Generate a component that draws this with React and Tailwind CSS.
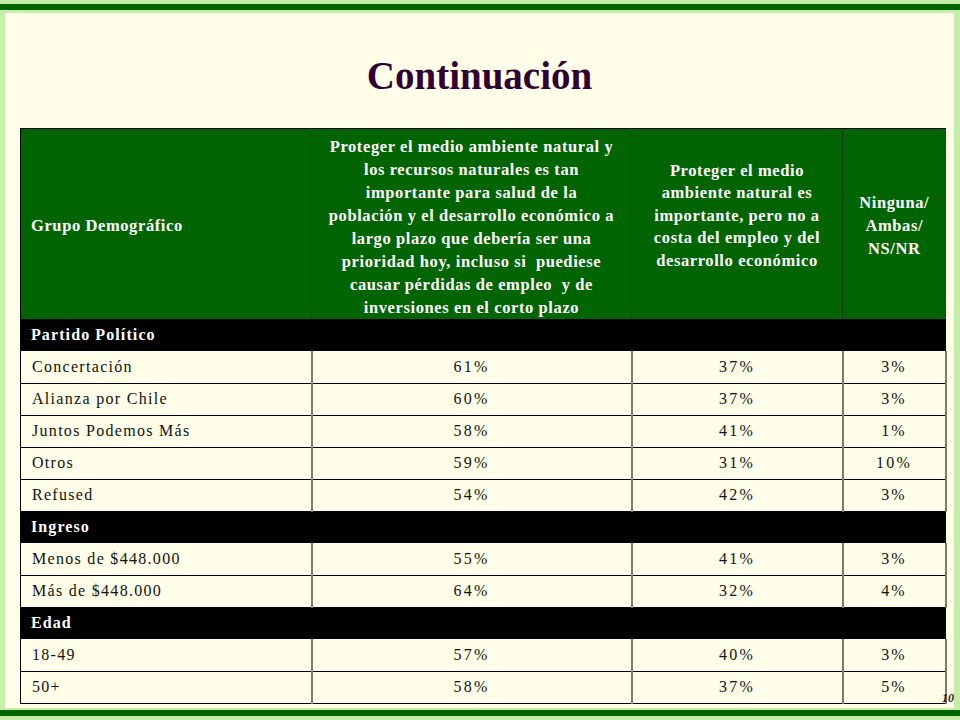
const sections = [
  {
    title: "Partido Político",
    rows: [
      ["Concertación", "61%", "37%", "3%"],
      ["Alianza por Chile", "60%", "37%", "3%"],
      ["Juntos Podemos Más", "58%", "41%", "1%"],
      ["Otros", "59%", "31%", "10%"],
      ["Refused", "54%", "42%", "3%"],
    ],
  },
  {
    title: "Ingreso",
    rows: [
      ["Menos de $448.000", "55%", "41%", "3%"],
      ["Más de $448.000", "64%", "32%", "4%"],
    ],
  },
  {
    title: "Edad",
    rows: [
      ["18-49", "57%", "40%", "3%"],
      ["50+", "58%", "37%", "5%"],
    ],
  },
];

const col2 = [
  "Proteger el medio ambiente natural y",
  "los recursos naturales es tan",
  "importante para salud de la",
  "población y el desarrollo económico a",
  "largo plazo que debería ser una",
  "prioridad hoy, incluso si  puediese",
  "causar pérdidas de empleo  y de",
  "inversiones en el corto plazo",
];

const col3 = [
  "Proteger el medio",
  "ambiente natural es",
  "importante, pero no a",
  "costa del empleo y del",
  "desarrollo económico",
];

const serif = "font-['Liberation_Serif','Times_New_Roman',serif]";

export default function App() {
  return (
    <div className={`w-[960px] h-[720px] bg-[#c6eeab] flex flex-col ${serif}`}>
      <div className="mt-[4px] h-[6px] bg-[#006400]" />
      <div className="relative mt-[3px] ml-[5px] mr-[6px] h-[695px] bg-[#fffee8]">
        <h1 className="h-[115px] flex items-center justify-center pt-[12px] text-[39px] font-bold text-[#330033]">
          Continuación
        </h1>
        <table className="ml-[15px] w-[925px] table-fixed border-collapse border-l border-t border-black">
          <colgroup>
            <col className="w-[291px]" />
            <col className="w-[320px]" />
            <col className="w-[211px]" />
            <col className="w-[103px]" />
          </colgroup>
          <thead>
            <tr className="h-[190px] bg-[#006400] text-white font-bold text-[16.5px] tracking-[0.6px] leading-[23px]">
              <th className="text-left pl-[10px] pt-[3px] align-middle border-r border-[#1d3a1d]">
                Grupo Demográfico
              </th>
              <th className="px-[2px] pt-[6px] align-middle text-center whitespace-pre border-r border-[#1d3a1d]">
                {col2.map((l) => (
                  <div key={l}>{l}</div>
                ))}
              </th>
              <th className="px-[2px] pb-[16px] align-middle text-center whitespace-pre leading-[22.5px] border-r border-[#1d3a1d]">
                {col3.map((l) => (
                  <div key={l}>{l}</div>
                ))}
              </th>
              <th className="px-[2px] pt-[2px] align-middle text-center leading-[23px]">
                Ninguna/
                <br />
                Ambas/
                <br />
                NS/NR
              </th>
            </tr>
          </thead>
          <tbody>
            {sections.map((s) => (
              <Section key={s.title} section={s} />
            ))}
          </tbody>
        </table>
        <span className="absolute right-[0px] bottom-[4px] text-[12px] italic font-bold leading-none text-[#222]">
          10
        </span>
      </div>
      <div className="mt-[2px] h-[6px] bg-[#006400]" />
    </div>
  );
}

function Section({ section }) {
  return (
    <>
      <tr className="h-[32px] bg-black text-white">
        <td colSpan={4} className="pl-[10px] text-[16px] tracking-[1.1px] font-bold">
          {section.title}
        </td>
      </tr>
      {section.rows.map((r) => (
        <tr key={r[0]} className="h-[32px] border-b border-black text-[16px] text-[#111]">
          <td className="pl-[11px] tracking-[1.3px] border-r-2 border-[#7c7c6c]">{r[0]}</td>
          <td className="text-center tracking-[2.2px] border-r-2 border-[#7c7c6c]">{r[1]}</td>
          <td className="text-center tracking-[2.2px] border-r-2 border-[#7c7c6c]">{r[2]}</td>
          <td className="text-center tracking-[2.2px] border-r-2 border-[#7c7c6c]">{r[3]}</td>
        </tr>
      ))}
    </>
  );
}
